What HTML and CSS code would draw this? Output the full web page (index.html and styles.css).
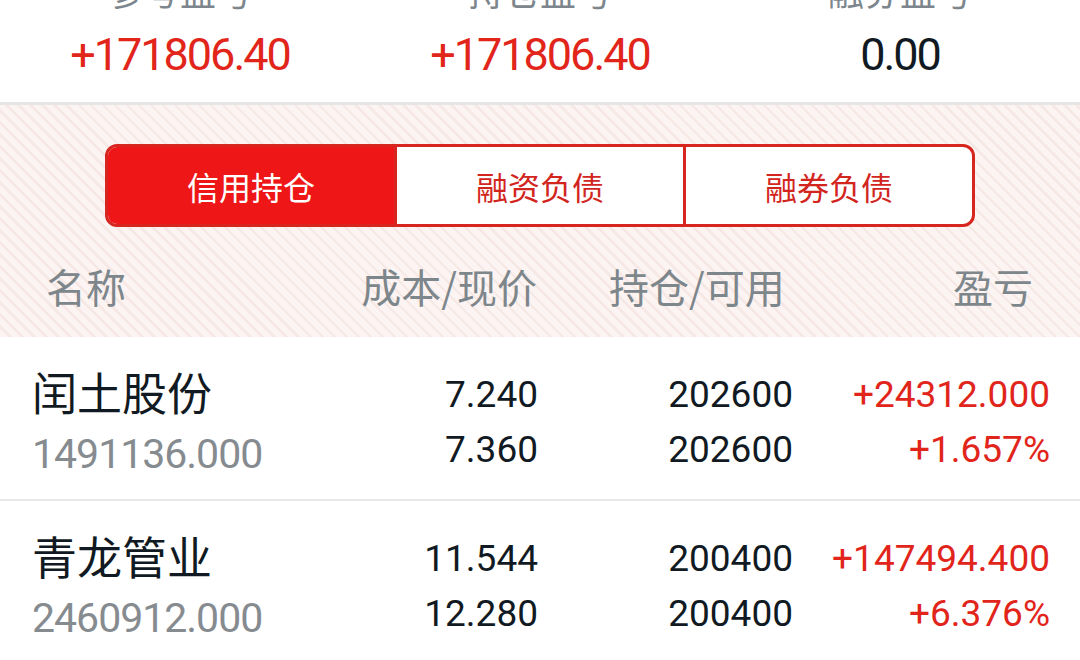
FILE: index.html
```html
<!DOCTYPE html>
<html lang="zh-CN">
  <head>
    <meta charset="UTF-8" />
    <meta name="viewport" content="width=device-width, initial-scale=1.0" />
    <title>信用持仓</title>
    <link rel="stylesheet" href="styles.css">
  </head>
  <body>
    <div class="container">
      <div class="summary">
        <div class="summary_item">
          <p class="label">参考盈亏</p>
          <p class="value up">+171806.40</p>
        </div>
        <div class="summary_item">
          <p class="label">持仓盈亏</p>
          <p class="value up">+171806.40</p>
        </div>
        <div class="summary_item">
          <p class="label">融券盈亏</p>
          <p class="value">0.00</p>
        </div>
      </div>

      <div class="panel">
        <div class="tabs">
          <div class="tab active">信用持仓</div>
          <div class="tab">融资负债</div>
          <div class="tab">融券负债</div>
        </div>
        <div class="head">
          <span>名称</span>
          <span class="head_cost">成本/现价</span>
          <span class="head_pos">持仓/可用</span>
          <span class="head_pnl">盈亏</span>
        </div>
      </div>

      <ul class="list">
        <li class="row">
          <div class="name_col">
            <p class="name">闰土股份</p>
            <p class="code">1491136.000</p>
          </div>
          <div class="cell">
            <p>7.240</p>
            <p>7.360</p>
          </div>
          <div class="cell">
            <p>202600</p>
            <p>202600</p>
          </div>
          <div class="cell up">
            <p>+24312.000</p>
            <p>+1.657%</p>
          </div>
        </li>
        <li class="row">
          <div class="name_col">
            <p class="name">青龙管业</p>
            <p class="code">2460912.000</p>
          </div>
          <div class="cell">
            <p>11.544</p>
            <p>12.280</p>
          </div>
          <div class="cell">
            <p>200400</p>
            <p>200400</p>
          </div>
          <div class="cell up">
            <p>+147494.400</p>
            <p>+6.376%</p>
          </div>
        </li>
      </ul>
    </div>
  </body>
</html>
```

FILE: styles.css
```css
html,
body,
div,
span,
p,
ul,
li {
  margin: 0;
  padding: 0;
  border: 0;
  font-size: 100%;
  font-weight: normal;
}

li {
  list-style: none;
}

html,
body {
  width: 100%;
  height: 100%;
  overflow: hidden;
}

body {
  background: #fff;
  color: #111a22;
  font-family: "Noto Sans CJK SC", sans-serif;
  line-height: 1;
}

.container {
  width: 1080px;
}

/* top summary */
.summary {
  display: flex;
  height: 105px;
  box-sizing: border-box;
  border-bottom: 3px solid #e6e6e6;
}
.summary_item {
  flex: 1;
  text-align: center;
}
.summary .label {
  margin-top: -27px;
  font-size: 36px;
  line-height: 34px;
  color: #7c868c;
}
.summary .value {
  margin-top: 25px;
  font-family: Roboto, sans-serif;
  font-size: 45px;
  line-height: 45px;
  letter-spacing: -2px;
  color: #111a22;
}
.up {
  color: #e1251b !important;
}

/* striped panel */
.panel {
  padding-top: 39px;
  background-color: #fcf4f2;
  background-image: repeating-linear-gradient(
    45deg,
    #fcf4f2 0,
    #fcf4f2 6px,
    #f6e8e4 6px,
    #f6e8e4 8.5px
  );
}
.tabs {
  display: flex;
  width: 870px;
  height: 83px;
  margin: 0 auto;
  box-sizing: border-box;
  border: 3px solid #d7261f;
  border-radius: 12px;
  overflow: hidden;
  background: #fff;
}
.tab {
  flex: 1;
  display: flex;
  align-items: center;
  justify-content: center;
  font-size: 32px;
  color: #d2251e;
}
.tab + .tab {
  border-left: 3px solid #d7261f;
}
.tab.active {
  background: #ee1616;
  color: #fff;
}
.head {
  display: grid;
  grid-template-columns: 1fr 200px 250px 246px;
  padding: 39px 47px 31px 46px;
  font-size: 40px;
  line-height: 40px;
  color: #7d868b;
}
.head_cost {
  text-align: right;
}
.head_pos {
  padding-left: 72px;
}
.head_pnl {
  text-align: right;
}

/* holdings */
.row {
  display: grid;
  grid-template-columns: 1fr 200px 255px 257px;
  padding: 30px 30px 20px 32px;
  border-bottom: 2px solid #e8e8e8;
}
.name {
  font-size: 45px;
  line-height: 50px;
  color: #111a22;
}
.code {
  margin-top: 12px;
  font-family: Roboto, sans-serif;
  font-size: 41px;
  line-height: 50px;
  letter-spacing: -1px;
  color: #868b90;
}
.cell {
  text-align: right;
  font-family: Roboto, sans-serif;
  font-size: 37px;
  line-height: 55px;
  color: #111a22;
}
```
